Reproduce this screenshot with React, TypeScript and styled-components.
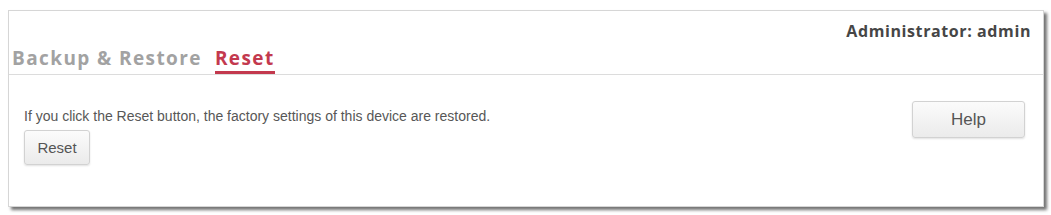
import React from 'react'
import styled, { createGlobalStyle } from 'styled-components'

const Global = createGlobalStyle`
  html, body { margin: 0; padding: 0; background: #fff; }
  body { font-family: "Open Sans", "Liberation Sans", sans-serif; }
`

const Page = styled.div`
  padding: 10px 0 0 8px;
  width: 1051px;
  height: 215px;
  box-sizing: border-box;
`

const Panel = styled.div`
  width: 1036px;
  height: 197px;
  box-sizing: border-box;
  background: #fff;
  border: 1px solid #d6d6d6;
  box-shadow: 3px 3px 3px rgba(0, 0, 0, 0.55);
  display: flex;
  flex-direction: column;
`

const TopBar = styled.div`
  display: flex;
  justify-content: flex-end;
  padding: 9px 12px 0 0;
  height: 25px;
`

const Admin = styled.span`
  font-size: 16px;
  font-weight: 700;
  color: #464646;
  letter-spacing: 0.6px;
  line-height: 22px;
`

const Tabs = styled.div`
  display: flex;
  gap: 13px;
  padding: 0 0 0 3px;
  border-bottom: 1px solid #dcdcdc;
  height: 29px;
  align-items: flex-end;
`

const Tab = styled.div<{ $active?: boolean }>`
  font-size: 19px;
  font-weight: 700;
  letter-spacing: 1.4px;
  color: ${p => (p.$active ? '#c3394e' : '#a2a2a2')};
  padding-bottom: 1px;
  border-bottom: 3px solid ${p => (p.$active ? '#c3394e' : 'transparent')};
  line-height: 24px;
`

const Content = styled.div`
  display: flex;
  justify-content: space-between;
  padding: 31px 18px 0 15px;
`

const Left = styled.div`
  display: flex;
  flex-direction: column;
  align-items: flex-start;
  gap: 4px;
`

const Info = styled.p`
  margin: 0;
  font-family: "Liberation Sans", Arial, sans-serif;
  font-size: 14px;
  color: #575757;
  line-height: 20px;
`

const Button = styled.button<{ $w: number; $h: number; $size: number }>`
  width: ${p => p.$w}px;
  height: ${p => p.$h}px;
  font-family: "Liberation Sans", Arial, sans-serif;
  font-size: ${p => p.$size}px;
  color: #555;
  background: linear-gradient(#fbfbfb, #ebebeb);
  border: 1px solid #d2d2d2;
  border-radius: 3px;
  box-shadow: 0 1px 2px rgba(0, 0, 0, 0.12);
  padding: 0;
`

const HelpButton = styled(Button)`
  margin-top: -5px;
`

export default function App() {
  return (
    <>
      <Global />
      <Page>
        <Panel>
          <TopBar>
            <Admin>Administrator: admin</Admin>
          </TopBar>
          <Tabs>
            <Tab>Backup &amp; Restore</Tab>
            <Tab $active>Reset</Tab>
          </Tabs>
          <Content>
            <Left>
              <Info>If you click the Reset button, the factory settings of this device are restored.</Info>
              <Button $w={66} $h={35} $size={15}>Reset</Button>
            </Left>
            <HelpButton $w={113} $h={37} $size={17}>Help</HelpButton>
          </Content>
        </Panel>
      </Page>
    </>
  )
}
